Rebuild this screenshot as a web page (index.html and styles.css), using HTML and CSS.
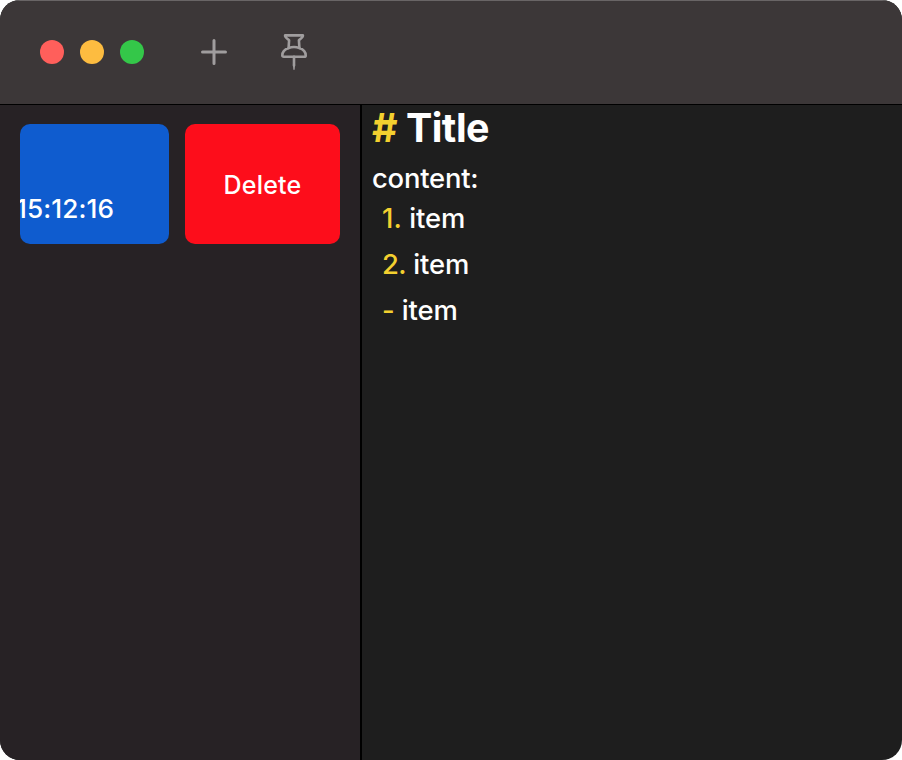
FILE: index.html
```
<!DOCTYPE html>
<html lang="en">
<head>
<meta charset="utf-8">
<title>Notes</title>
<link rel="stylesheet" href="styles.css">
</head>
<body>
<div class="window">
  <header class="toolbar">
    <div class="lights">
      <span class="light close"></span>
      <span class="light minimize"></span>
      <span class="light zoom"></span>
    </div>
    <svg class="icon plus" width="26" height="26" viewBox="0 0 26 26"><path d="M13 1.5v23M1.5 13h23"/></svg>
    <svg class="icon pin" width="26" height="38" viewBox="0 0 26 38">
      <path d="M4.1 2.4h17.8c.4 1.8-1.8 3-4 4.8l.5 7.8c3.9 1.4 6.3 4.6 6.3 7.4 0 .9-.5 1.4-1.4 1.4H2.7c-.9 0-1.4-.5-1.4-1.4 0-2.8 2.4-6 6.3-7.4l.5-7.8c-2.2-1.8-4.4-3-4-4.8z"/>
      <path d="M7.6 15c3.2-1.2 7.6-1.2 10.8 0"/>
      <path d="M13 23.8v8.6"/>
      <path class="needle" d="M12.6 31h.8l-.4 5.2z"/>
    </svg>
  </header>
  <div class="body">
    <aside class="sidebar">
      <div class="note"><span class="time">15:12:16</span></div>
      <button class="delete">Delete</button>
    </aside>
    <main class="editor">
      <h1><span class="mark">#</span> Title</h1>
      <p class="text">content:</p>
      <p class="item one"><span class="mark">1.</span> item</p>
      <p class="item two"><span class="mark">2.</span> item</p>
      <p class="item dash"><span class="mark">-</span> item</p>
    </main>
  </div>
</div>
</body>
</html>
```
FILE: styles.css
```
* { box-sizing: border-box; }
body {
  margin: 0;
  background: #fff;
  font-family: Inter, "Liberation Sans", sans-serif;
  color: #fff;
}
.window {
  width: 902px;
  height: 760px;
  border-radius: 20px;
  overflow: hidden;
  display: flex;
  flex-direction: column;
  background: #1e1e1e;
}
.toolbar {
  height: 105px;
  flex: none;
  display: flex;
  align-items: center;
  padding-left: 40px;
  background: #3c3738;
  border-bottom: 1px solid #000;
  box-shadow: inset 0 1px #696566;
}
.lights { display: flex; gap: 16px; }
.light { width: 24px; height: 24px; border-radius: 50%; }
.close { background: #ff5f5b; }
.minimize { background: #fdbc40; }
.zoom { background: #34c749; }
.icon {
  fill: none;
  stroke: #a09d9e;
  stroke-width: 2.6;
  stroke-linecap: round;
  stroke-linejoin: round;
}
.plus { margin-left: 57px; stroke-width: 3; }
.pin { margin-left: 54px; }
.needle { stroke-width: 1.4; }
.body { flex: 1; display: flex; }
.sidebar {
  width: 362px;
  padding: 19px 20px;
  display: flex;
  align-items: flex-start;
  gap: 16px;
  background: #272225;
  border-right: 2px solid #000;
}
.note {
  width: 149px;
  height: 120px;
  border-radius: 10px;
  overflow: hidden;
  background: #0f5ccf;
  display: flex;
  align-items: flex-end;
  padding-bottom: 19px;
}
.time {
  margin-left: -4px;
  font-size: 26.2px;
  font-weight: 500;
  line-height: 32px;
  letter-spacing: 0.1px;
}
.delete {
  width: 155px;
  height: 120px;
  border: 0;
  border-radius: 10px;
  background: #fd0d1b;
  color: #fff;
  font: 500 25px/30px Inter, "Liberation Sans", sans-serif;
  letter-spacing: 0.2px;
  padding: 2px 0 0;
}
.editor { flex: 1; padding: 1px 10px; }
.mark { color: #f3d02f; }
h1, p { margin: 0; white-space: pre; }
h1 {
  font-size: 39.4px;
  line-height: 44px;
  font-weight: 700;
  letter-spacing: -0.5px;
  margin-bottom: 11px;
}
.text, .item { font-size: 27.4px; font-weight: 450; letter-spacing: -0.1px; }
.text { line-height: 34px; letter-spacing: -0.2px; }
.item { line-height: 46px; padding-left: 10px; }
.item .mark { font-weight: 550; }
.one .mark { letter-spacing: 0.2px; }
.two .mark { letter-spacing: -0.6px; }
```
